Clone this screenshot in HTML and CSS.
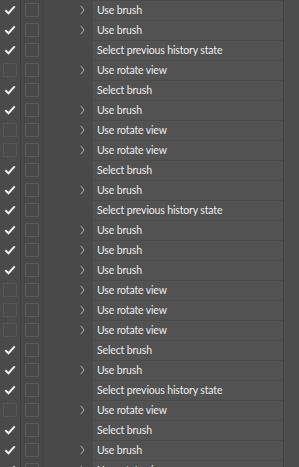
FILE: index.html
```html
<!DOCTYPE html>
<html>
<head>
<meta charset="utf-8">
<link rel="stylesheet" href="styles.css">
</head>
<body>
<div class="panel">
  <div class="list" id="list"></div>
  <div class="scroll"></div>
</div>
<script>
const rows = [
 ["Use brush",1,1],["Use brush",1,1],["Select previous history state",1,0],["Use rotate view",0,1],
 ["Select brush",1,0],["Use brush",1,1],["Use rotate view",0,1],["Use rotate view",0,1],
 ["Select brush",1,0],["Use brush",1,1],["Select previous history state",1,0],["Use brush",1,1],
 ["Use brush",1,1],["Use brush",1,1],["Use rotate view",0,1],["Use rotate view",0,1],
 ["Use rotate view",0,1],["Select brush",1,0],["Use brush",1,1],["Select previous history state",1,0],
 ["Use rotate view",0,1],["Select brush",1,0],["Use brush",1,1],["Use rotate view",1,1]
];
const check = '<svg width="12" height="10" viewBox="0 0 12 10"><path d="M1.3 5.2 L4.5 8.3 L10.7 1.4" fill="none" stroke="#ececec" stroke-width="2.1"/></svg>';
const chev = '<svg width="5" height="10" viewBox="0 0 5 10"><path d="M0.8 0.8 L4 5 L0.8 9.2" fill="none" stroke="#b0b0b0" stroke-width="1"/></svg>';
const list = document.getElementById('list');
list.innerHTML = rows.map(r => `
<div class="row">
  <div class="c1">${r[1] ? check : '<span class="box faint"></span>'}</div>
  <div class="c2"><span class="box"></span></div>
  <div class="c3">${r[2] ? chev : ''}</div>
  <div class="name">${r[0]}</div>
</div>`).join('');
</script>
</body>
</html>
```
FILE: styles.css
```css
html, body { margin: 0; padding: 0; }
body {
  background: #494949;
  width: 299px; height: 467px; overflow: hidden;
  font-family: Lato, "Noto Sans", sans-serif;
}
.panel { display: flex; height: 467px; }
.list { width: 283px; display: flex; flex-direction: column; }
.scroll { flex: 1; background: #4d4d4d; border-left: 1px solid #444; }
.row { display: flex; height: 20px; flex: none; }
.c1 {
  width: 20px; display: flex; align-items: center; justify-content: center;
  border-right: 1px solid #3f3f3f; background: #4a4a4a;
}
.c2 { width: 22px; display: flex; align-items: center; padding-left: 4px; box-sizing: border-box; border-right: 1px solid #444; }
.box {
  display: block; width: 12px; height: 12px;
  border: 1px solid #595959;
}
.box.faint { border-color: #555; }
.c3 { width: 50px; display: flex; align-items: center; justify-content: flex-end; padding-right: 8px; box-sizing: border-box; }
.name {
  flex: 1; background: #525252; margin: 1px 0 0 0;
  color: #ececec; font-size: 10.5px; letter-spacing: -0.15px; line-height: 19px; padding-left: 4px;
  white-space: nowrap; overflow: hidden;
}
```
